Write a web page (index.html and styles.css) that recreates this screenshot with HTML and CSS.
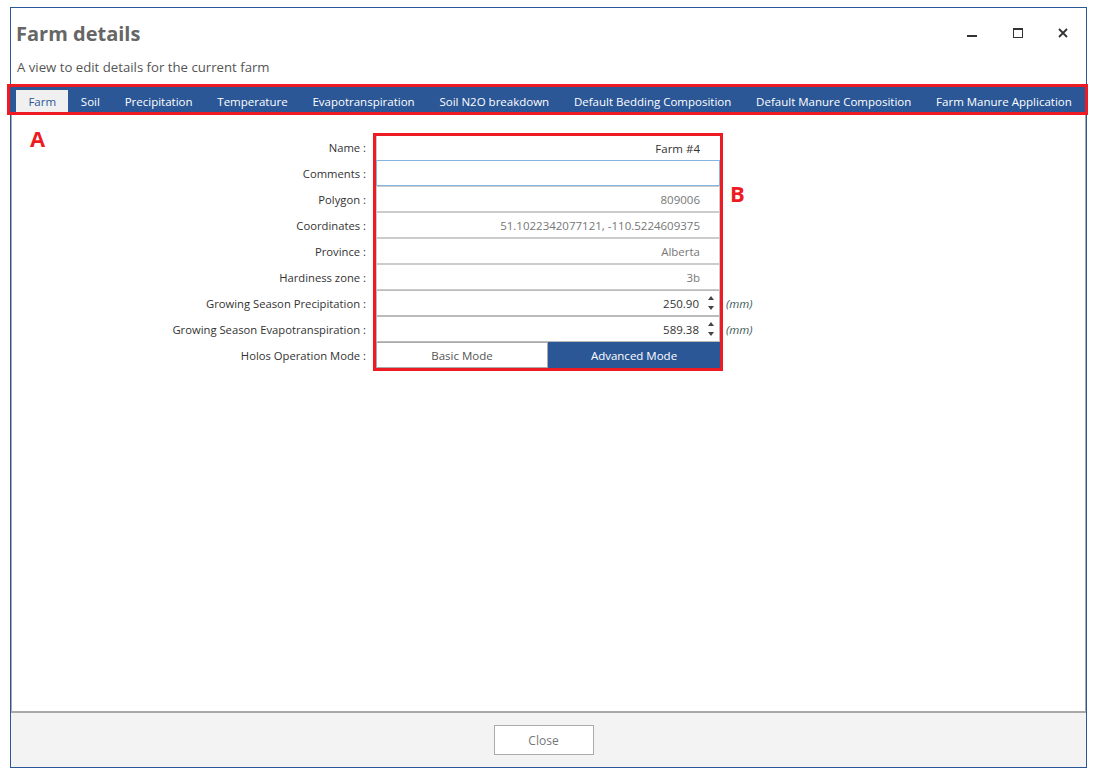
FILE: index.html
```html
<!DOCTYPE html>
<html>
<head>
<meta charset="utf-8">
<title>Farm details</title>
<link rel="stylesheet" href="styles.css">
</head>
<body>
<div class="window">
  <div class="header">
    <div class="titles">
      <h1 class="title">Farm details</h1>
      <p class="subtitle">A view to edit details for the current farm</p>
    </div>
    <div class="controls">
      <span class="ctl ctl-min"></span>
      <span class="ctl ctl-max"></span>
      <svg class="ctl-close" width="10" height="10" viewBox="0 0 10 10"><path d="M1 1L9 9M9 1L1 9" stroke="#333" stroke-width="1.8" fill="none"/></svg>
    </div>
  </div>
  <div class="tabs-wrap">
    <div class="tabs">
      <span class="tab active">Farm</span>
      <span class="tab">Soil</span>
      <span class="tab">Precipitation</span>
      <span class="tab">Temperature</span>
      <span class="tab">Evapotranspiration</span>
      <span class="tab">Soil N2O breakdown</span>
      <span class="tab">Default Bedding Composition</span>
      <span class="tab">Default Manure Composition</span>
      <span class="tab">Farm Manure Application</span>
    </div>
    <div class="annot-box annot-tabs"></div>
    <span class="annot-letter annot-a">A</span>
  </div>
  <div class="content">
    <div class="form">
      <div class="labels">
        <div class="lbl">Name :</div>
        <div class="lbl">Comments :</div>
        <div class="lbl">Polygon :</div>
        <div class="lbl">Coordinates :</div>
        <div class="lbl">Province :</div>
        <div class="lbl">Hardiness zone :</div>
        <div class="lbl">Growing Season Precipitation :</div>
        <div class="lbl">Growing Season Evapotranspiration :</div>
        <div class="lbl">Holos Operation Mode :</div>
      </div>
      <div class="fields">
        <div class="field field-name">Farm #4</div>
        <div class="field field-focus"></div>
        <div class="field ro">809006</div>
        <div class="field ro">51.1022342077121, -110.5224609375</div>
        <div class="field ro">Alberta</div>
        <div class="field ro">3b</div>
        <div class="field num"><span>250.90</span><span class="spin"><i class="up"></i><i class="down"></i></span></div>
        <div class="field num"><span>589.38</span><span class="spin"><i class="up"></i><i class="down"></i></span></div>
        <div class="modes">
          <span class="mode">Basic Mode</span>
          <span class="mode on">Advanced Mode</span>
        </div>
        <div class="annot-box annot-form"></div>
        <span class="annot-letter annot-b">B</span>
      </div>
      <div class="units">
        <div class="unit"></div>
        <div class="unit"></div>
        <div class="unit"></div>
        <div class="unit"></div>
        <div class="unit"></div>
        <div class="unit"></div>
        <div class="unit">(mm)</div>
        <div class="unit">(mm)</div>
        <div class="unit"></div>
      </div>
    </div>
  </div>
  <div class="footer">
    <button class="close-btn">Close</button>
  </div>
</div>
</body>
</html>
```

FILE: styles.css
```css
* { box-sizing: border-box; }
html, body { margin: 0; padding: 0; background: #fff; }
body { font-family: "Open Sans", "Noto Sans", sans-serif; color: #333; }

.window {
  margin: 7px 0 0 10px;
  width: 1077px;
  height: 761px;
  border: 1px solid #2b5797;
  display: flex;
  flex-direction: column;
}

.header {
  height: 79px;
  display: flex;
  justify-content: space-between;
  align-items: flex-start;
}
.titles { padding-left: 5px; }
.title {
  margin: 12px 0 0 0;
  font-size: 20px;
  line-height: 28px;
  font-weight: 700;
  color: #666;
}
.subtitle {
  margin: 10px 0 0 1px;
  font-size: 13.2px;
  line-height: 18px;
  color: #555;
}
.controls {
  display: flex;
  align-items: center;
  margin-top: 20px;
  margin-right: 18px;
  height: 10px;
}
.ctl-min { width: 10px; height: 2px; background: #333; margin-top: 6px; }
.ctl-max { width: 10px; height: 10px; border: 1px solid #333; border-top-width: 2px; margin-left: 36px; }
.ctl-close { margin-left: 35px; }

.tabs-wrap { position: relative; }
.tabs {
  height: 25px;
  background: #2b5797;
  display: flex;
  align-items: flex-end;
  padding-left: 5px;
}
.tab {
  height: 22px;
  line-height: 23px;
  padding: 0 12.4px;
  font-size: 11.5px;
  color: #fff;
  white-space: nowrap;
}
.tab.active { background: #f0f0f0; color: #2b5797; }

.annot-box {
  position: absolute;
  border: 3px solid #ed1c24;
  pointer-events: none;
}
.annot-tabs { left: -4px; right: -2px; top: -3px; bottom: -3px; }
.annot-letter {
  position: absolute;
  color: #ed1c24;
  font-family: "Open Sans", sans-serif;
  font-weight: 700;
  font-size: 22px;
  line-height: 24px;
}
.annot-a { left: 19px; top: 39px; }

.content {
  flex: 1;
  border-left: 1px solid #a8a8a8;
  border-right: 1px solid #a8a8a8;
  border-bottom: 2px solid #a8a8a8;
}

.form {
  display: flex;
  margin-top: 23px;
  font-size: 11.25px;
}
.labels { width: 354px; }
.lbl {
  height: 26px;
  line-height: 26px;
  text-align: right;
  color: #333;
}
.fields {
  position: relative;
  width: 344px;
  margin-left: 10px;
}
.field {
  height: 26px;
  line-height: 26px;
  border: 1px solid #ccc;
  text-align: right;
  padding-right: 19px;
  color: #333;
  font-size: 11.5px;
}
.field-name { border-color: #fff #fff #fff #ccc; border-bottom: none; height: 25px; line-height: 26px; }
.field-focus { border-color: #86b4e0; }
.field.ro { color: #777; }
.field.num {
  display: flex;
  justify-content: flex-end;
  align-items: center;
  padding-right: 4px;
  border-color: #bbb;
}
.field.num span:first-child { line-height: 26px; padding-top: 2px; }
.spin {
  display: flex;
  flex-direction: column;
  justify-content: space-between;
  width: 8px;
  height: 14px;
  margin-left: 8px;
  margin-right: 0;
}
.spin i { display: block; width: 0; height: 0; margin: 0 auto; border-left: 3px solid transparent; border-right: 3px solid transparent; }
.spin .up { border-bottom: 4px solid #444; }
.spin .down { border-top: 4px solid #444; }

.modes { display: flex; height: 26px; font-size: 11.5px; }
.mode {
  flex: 1;
  text-align: center;
  line-height: 26px;
  border: 1px solid #aaa;
  color: #555;
  background: #fff;
}
.mode.on { background: #2b5797; border-color: #2b5797; color: #fff; }

.annot-form { left: -3px; right: -3px; top: -2px; bottom: -2px; }
.annot-b { left: 354px; top: 46px; }

.units { margin-left: 6px; }
.unit {
  height: 26px;
  line-height: 26px;
  font-style: italic;
  color: #3d5a5a;
  font-size: 11.5px;
}

.footer {
  height: 54px;
  background: #f3f3f3;
  display: flex;
  align-items: center;
  justify-content: center;
  padding-right: 10px;
}
.close-btn {
  width: 100px;
  height: 30px;
  background: #fff;
  border: 1px solid #aaa;
  font-family: "Open Sans", sans-serif;
  font-size: 12px;
  color: #777;
}
```
